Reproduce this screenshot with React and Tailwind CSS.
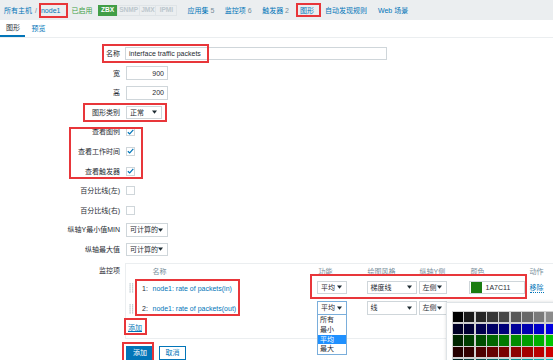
import React from "react";

const Arrow = () => (
  <svg width="5" height="4" viewBox="0 0 5 4" className="shrink-0">
    <path d="M0 0.5 L5 0.5 L2.5 3.8 Z" fill="#1f2c33" />
  </svg>
);

const Sel = ({ cls, text, focused }) => (
  <div
    className={`${cls} h-[13.5px] border ${
      focused ? "border-[#7aaedb]" : "border-[#cfd6da]"
    } bg-white flex items-center justify-between pl-[3px] pr-[4px] text-[#1f2c33]`}
  >
    <span>{text}</span>
    <Arrow />
  </div>
);

const Check = () => (
  <div className="w-[9px] h-[9px] border border-[#cfd6da] bg-white flex items-center justify-center">
    <svg width="7" height="6" viewBox="0 0 7 6">
      <path d="M0.8 3.2 L2.7 5 L6.3 0.9" stroke="#0275b8" strokeWidth="1.2" fill="none" />
    </svg>
  </div>
);

const Box = () => <div className="w-[9px] h-[9px] border border-[#cfd6da] bg-white" />;

const Row = ({ label, children }) => (
  <div className="h-[19.6px] flex items-center">
    <div className="w-[120px] shrink-0 text-right text-[#1f2c33]">{label}</div>
    <div className="ml-[6px] flex items-center">{children}</div>
  </div>
);

const Handle = () => (
  <svg width="5" height="10" viewBox="0 0 5 10" className="shrink-0">
    {[0, 1, 2, 3, 4].map((r) => (
      <g key={r}>
        <rect x="0.5" y={r * 2 + 0.3} width="1.2" height="1.2" fill="#acbbc2" />
        <rect x="3" y={r * 2 + 0.3} width="1.2" height="1.2" fill="#acbbc2" />
      </g>
    ))}
  </svg>
);

const palette = [
  ["#000000", "#1a1a1a", "#262626", "#363636", "#474747", "#575757", "#686868", "#7a7a7a", "#8c8c8c"],
  ["#000026", "#000033", "#00004d", "#000066", "#00007a", "#000099", "#0000b0", "#0000c8", "#0000e0"],
  ["#002600", "#003d00", "#004d00", "#006600", "#007a00", "#008c00", "#009e00", "#00b000", "#00c400"],
  ["#260000", "#330000", "#4d0000", "#660000", "#7a0000", "#8c0000", "#a30000", "#b80000", "#cc0000"],
  ["#002626", "#003d3d", "#004d4d", "#006666", "#007a7a", "#008c8c", "#009e9e", "#00b0b0", "#00c4c4"],
];

const RedBox = ({ cls }) => (
  <div className={`absolute ${cls} border-2 border-[#e8363a] pointer-events-none`} />
);

export default function App() {
  return (
    <div className="relative w-[553px] h-[360px] overflow-hidden bg-white text-[7px] leading-none font-[family-name:Liberation_Sans,Noto_Sans_CJK_SC,sans-serif] text-[#1f2c33]">
      {/* top host nav */}
      <div className="h-[20px] bg-[#ebeef0] flex items-center pl-[4px] whitespace-nowrap">
        <span className="text-[#0275b8]">所有主机</span>
        <span className="ml-[3px] text-[#768d99]">/</span>
        <span className="ml-[4px] text-[#0275b8]">node1</span>
        <span className="ml-[11px] text-[#429e47]">已启用</span>
        <div className="ml-[6px] flex items-center h-[11px] text-[6.6px] font-bold">
          <span className="h-full w-[18.5px] flex items-center justify-center bg-[#429e47] text-white">ZBX</span>
          <span className="h-full w-[23.5px] flex items-center justify-center border border-[#dfe4e7] text-[#bcc7cd]">SNMP</span>
          <span className="h-full w-[16px] flex items-center justify-center border-y border-r border-[#dfe4e7] text-[#bcc7cd]">JMX</span>
          <span className="h-full w-[21px] flex items-center justify-center border-y border-r border-[#dfe4e7] text-[#bcc7cd]">IPMI</span>
        </div>
        <span className="ml-[10px] text-[#0275b8]">应用集 <span className="text-[#768d99]">5</span></span>
        <span className="ml-[10.5px] text-[#0275b8]">监控项 <span className="text-[#768d99]">6</span></span>
        <span className="ml-[10.5px] text-[#0275b8]">触发器 <span className="text-[#768d99]">2</span></span>
        <span className="ml-[11px] text-[#0275b8]">图形</span>
        <span className="ml-[11px] text-[#0275b8]">自动发现规则</span>
        <span className="ml-[11px] text-[#0275b8]">Web 场景</span>
      </div>

      {/* tabs */}
      <div className="h-[18px] flex items-stretch border-b border-[#ebeef0]">
        <div className="w-[25px] flex items-center pl-[6px] border-b-2 border-[#0275b8] text-[#1f2c33]">图形</div>
        <div className="ml-[6.5px] flex items-center text-[#0275b8]">预览</div>
      </div>

      {/* form */}
      <div className="pt-[5.7px]">
        <Row label="名称">
          <div className="-ml-[1px] w-[262px] h-[13.5px] border border-[#cfd6da] flex items-center pl-[3px]">
            interface traffic packets
          </div>
        </Row>
        <Row label="宽">
          <div className="w-[42px] h-[14px] border border-[#cfd6da] flex items-center justify-end pr-[3px]">900</div>
        </Row>
        <Row label="高">
          <div className="w-[42px] h-[14px] border border-[#cfd6da] flex items-center justify-end pr-[3px]">200</div>
        </Row>
        <Row label="图形类别">
          <Sel cls="w-[36px]" text="正常" />
        </Row>
        <Row label="查看图例">
          <Check />
        </Row>
        <Row label="查看工作时间">
          <Check />
        </Row>
        <Row label="查看触发器">
          <Check />
        </Row>
        <Row label="百分比线(左)">
          <Box />
        </Row>
        <Row label="百分比线(右)">
          <Box />
        </Row>
        <Row label="纵轴Y最小值MIN">
          <Sel cls="w-[42px]" text="可计算的" />
        </Row>
        <Row label="纵轴最大值">
          <Sel cls="w-[42px]" text="可计算的" />
        </Row>

        {/* items */}
        <div className="flex mt-[4px]">
          <div className="w-[120px] shrink-0 h-[14px] flex items-center justify-end">监控项</div>
          <div className="ml-[5px] w-[450px] shrink-0 border border-[#ebeef0] pb-[3px]">
            <div className="h-[14px] flex items-center text-[#768d99]">
              <div className="w-[26.5px] shrink-0" />
              <div className="w-[164.5px] shrink-0">名称</div>
              <div className="w-[49.5px] shrink-0 pl-[1.5px]">功能</div>
              <div className="w-[52px] shrink-0 pl-[1px]">绘图风格</div>
              <div className="w-[50px] shrink-0 pl-[1px]">纵轴Y侧</div>
              <div className="w-[61px] shrink-0 pl-[2px]">颜色</div>
              <div>动作</div>
            </div>
            {/* row 1 */}
            <div className="h-[20.5px] flex items-center">
              <div className="w-[12px] shrink-0 pl-[2.5px] flex"><Handle /></div>
              <div className="w-[14.5px] shrink-0 pl-[4px]">1:</div>
              <div className="w-[164.5px] shrink-0 text-[#0275b8]">node1: rate of packets(in)</div>
              <div className="w-[49.5px] shrink-0 -mt-[2px]"><Sel cls="w-[30px]" text="平均" /></div>
              <div className="w-[52px] shrink-0 -mt-[2px]"><Sel cls="w-[50px]" text="梯度线" /></div>
              <div className="w-[50px] shrink-0 -mt-[2px]"><Sel cls="w-[28.5px]" text="左侧" /></div>
              <div className="w-[61px] shrink-0 -mt-[2px]">
                <div className="w-[56px] h-[13.5px] border border-[#cfd6da] flex items-center pl-[1px]">
                  <div className="w-[11px] h-[10.5px] bg-[#1a7c11]" />
                  <span className="ml-[4px]">1A7C11</span>
                </div>
              </div>
              <div className="text-[#0275b8] border-b border-dotted border-[#0275b8] pb-[0.5px]">移除</div>
            </div>
            {/* row 2 */}
            <div className="h-[20.5px] flex items-center">
              <div className="w-[12px] shrink-0 pl-[2.5px] flex"><Handle /></div>
              <div className="w-[14.5px] shrink-0 pl-[4px]">2:</div>
              <div className="w-[164.5px] shrink-0 text-[#0275b8]">node1: rate of packets(out)</div>
              <div className="w-[49.5px] shrink-0 -mt-[2px]"><Sel cls="w-[30px]" text="平均" focused /></div>
              <div className="w-[52px] shrink-0 -mt-[2px]"><Sel cls="w-[50px]" text="线" /></div>
              <div className="w-[50px] shrink-0 -mt-[2px]"><Sel cls="w-[28.5px]" text="左侧" /></div>
              <div className="w-[61px] shrink-0" />
            </div>
            <div className="h-[15.7px] flex items-center pl-[2px]">
              <span className="text-[#0275b8] underline">添加</span>
            </div>
          </div>
        </div>

        {/* buttons */}
        <div className="flex pl-[126px] mt-[7px]">
          <div className="w-[28px] h-[14px] bg-[#0275b8] text-white flex items-center justify-center">添加</div>
          <div className="ml-[5px] w-[27px] h-[14px] border border-[#0275b8] text-[#0275b8] bg-white flex items-center justify-center">取消</div>
        </div>
      </div>

      {/* function dropdown list */}
      <div className="absolute left-[317px] top-[314px] w-[30px] h-[40.5px] bg-white border border-[#7aaedb] flex flex-col text-[#1f2c33]">
        <div className="h-[10px] flex items-center pl-[2px]">所有</div>
        <div className="h-[10px] flex items-center pl-[2px]">最小</div>
        <div className="h-[10px] flex items-center pl-[2px] bg-[#1e90ff] text-white">平均</div>
        <div className="h-[9.5px] flex items-center pl-[2px]">最大</div>
      </div>

      {/* color picker popup */}
      <div className="absolute left-[446px] top-[301.5px] w-[130px] h-[80px] bg-white border border-[#dfe4e7] shadow-[0_0_3px_rgba(0,0,0,0.15)] pl-[5.5px] pt-[9.5px]">
        <div className="grid grid-cols-[repeat(9,10.3px)] gap-[1.37px]">
          {palette.flat().map((c, i) => (
            <div key={i} className="h-[10.3px] outline outline-[0.5px] outline-[#d0d0d0]" style={{ backgroundColor: c }} />
          ))}
        </div>
      </div>

      {/* annotation red boxes */}
      <RedBox cls="left-[39px] top-[2.5px] w-[29px] h-[15px]" />
      <RedBox cls="left-[295.5px] top-[3px] w-[25px] h-[14px]" />
      <RedBox cls="left-[102px] top-[44px] w-[107px] h-[18.7px]" />
      <RedBox cls="left-[82.5px] top-[103.3px] w-[84px] h-[19px]" />
      <RedBox cls="left-[69px] top-[126.7px] w-[74.3px] h-[52.6px]" />
      <RedBox cls="left-[135px] top-[279px] w-[105px] h-[36.7px]" />
      <RedBox cls="left-[310px] top-[274px] w-[217px] h-[25px]" />
      <RedBox cls="left-[124px] top-[318px] w-[22.7px] h-[17px]" />
      <RedBox cls="left-[121.7px] top-[341.7px] w-[32.3px] h-[20px]" />
    </div>
  );
}
